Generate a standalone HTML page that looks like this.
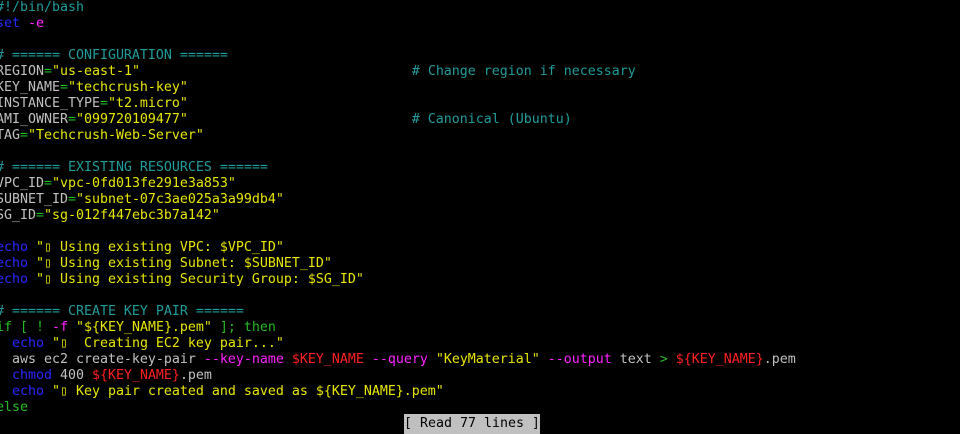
<!DOCTYPE html>
<html><head><meta charset="utf-8"><style>
html,body{margin:0;padding:0;background:#000;width:960px;height:427px;overflow:hidden}
pre{position:absolute;left:-4px;top:0px;margin:0;font-family:"DejaVu Sans Mono","Liberation Mono",monospace;font-size:13.29px;line-height:16px;color:#c0c0c0;white-space:pre}
.c{color:#1f9c9c}.b{color:#2828ff}.m{color:#ff22ff}.y{color:#e6e600}.g{color:#22bb22}.r{color:#ff2020}.w{color:#c0c0c0}
.bar{position:absolute;left:404px;top:414px;width:136px;height:18px;padding-top:2px;background:#c0c0c0;color:#000;font-family:"DejaVu Sans Mono","Liberation Mono",monospace;font-size:13.29px;line-height:16px;white-space:pre}
</style></head><body>
<pre><span class="c">#!/bin/bash</span>
<span class="b">set</span> <span class="m">-e</span>

<span class="c"># ====== CONFIGURATION ======</span>
REGION<span class="g">=</span><span class="y">"us-east-1"</span>                                  <span class="c"># Change region if necessary</span>
KEY_NAME<span class="g">=</span><span class="y">"techcrush-key"</span>
INSTANCE_TYPE<span class="g">=</span><span class="y">"t2.micro"</span>
AMI_OWNER<span class="g">=</span><span class="y">"099720109477"</span>                            <span class="c"># Canonical (Ubuntu)</span>
TAG<span class="g">=</span><span class="y">"Techcrush-Web-Server"</span>

<span class="c"># ====== EXISTING RESOURCES ======</span>
VPC_ID<span class="g">=</span><span class="y">"vpc-0fd013fe291e3a853"</span>
SUBNET_ID<span class="g">=</span><span class="y">"subnet-07c3ae025a3a99db4"</span>
SG_ID<span class="g">=</span><span class="y">"sg-012f447ebc3b7a142"</span>

<span class="b">echo</span> <span class="y">"▯ Using existing VPC: $VPC_ID"</span>
<span class="b">echo</span> <span class="y">"▯ Using existing Subnet: $SUBNET_ID"</span>
<span class="b">echo</span> <span class="y">"▯ Using existing Security Group: $SG_ID"</span>

<span class="c"># ====== CREATE KEY PAIR ======</span>
<span class="g">if [ ! </span><span class="m">-f</span> <span class="y">"${KEY_NAME}.pem"</span> <span class="g">]; then</span>
  <span class="b">echo</span> <span class="y">"▯  Creating EC2 key pair..."</span>
  aws ec2 create-key-pair <span class="m">--key-name</span> <span class="r">$KEY_NAME</span> <span class="m">--query</span> <span class="y">"KeyMaterial"</span> <span class="m">--output</span> text <span class="g">&gt;</span> <span class="r">${KEY_NAME}</span>.pem
  <span class="b">chmod</span> 400 <span class="r">${KEY_NAME}</span>.pem
  <span class="b">echo</span> <span class="y">"▯ Key pair created and saved as ${KEY_NAME}.pem"</span>
<span class="g">else</span></pre>
<div class="bar">[ Read 77 lines ]</div>
</body></html>
